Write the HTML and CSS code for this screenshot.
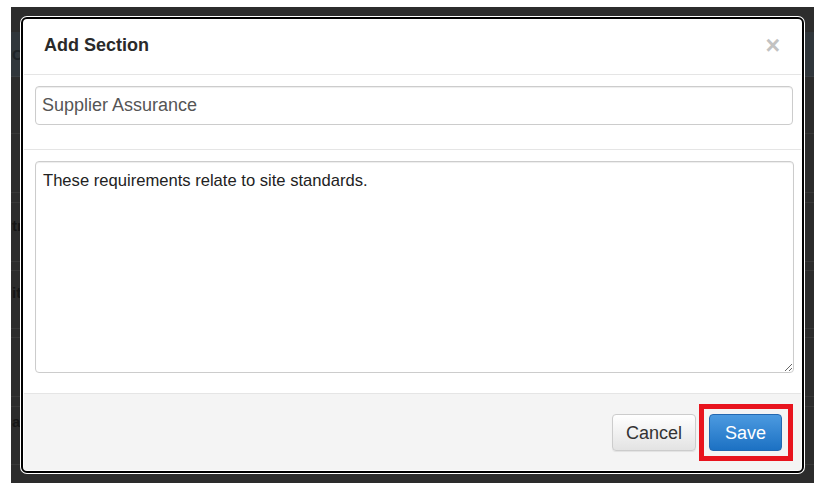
FILE: index.html
```html
<!DOCTYPE html>
<html lang="en">
<head>
<meta charset="utf-8">
<title>Add Section</title>
<link rel="stylesheet" href="styles.css">
</head>
<body>
<div class="backdrop">
  <div class="bg-row r-top"></div>
  <div class="bg-row r-band"><span class="bg-text">Co</span></div>
  <div class="bg-row r57"></div>
  <div class="bg-row r59"></div>
  <div class="bg-row r10"></div>
  <div class="bg-row r59"><span class="bg-text t-tr">tr</span></div>
  <div class="bg-row r9"></div>
  <div class="bg-row r58"><span class="bg-text t-ite">ite</span></div>
  <div class="bg-row r9"></div>
  <div class="bg-row r59"></div>
  <div class="bg-row r10"></div>
  <div class="bg-row r58"><span class="bg-text t-a">a</span></div>

  <div class="modal">
    <div class="modal-header">
      <h4 class="modal-title">Add Section</h4>
      <span class="close">×</span>
    </div>
    <div class="modal-section sec-input">
      <input class="field" type="text" value="Supplier Assurance">
    </div>
    <div class="modal-section sec-text">
      <textarea class="area">These requirements relate to site standards.</textarea>
    </div>
    <div class="modal-footer">
      <button class="btn btn-default">Cancel</button>
      <span class="highlight"><button class="btn btn-primary">Save</button></span>
    </div>
  </div>
</div>
</body>
</html>
```

FILE: styles.css
```css
html, body {
  margin: 0;
  padding: 0;
  background: #ffffff;
  font-family: "Liberation Sans", Arial, sans-serif;
}

.backdrop {
  position: relative;
  margin: 7px 0 0 11px;
  width: 803px;
  height: 476px;
  background: #2c2c2c;
  overflow: hidden;
}

.bg-row {
  box-sizing: border-box;
  border-bottom: 1px solid #383838;
  font-size: 15px;
  font-weight: bold;
  color: #151515;
  white-space: nowrap;
}
.r-top { height: 25px; border-bottom: none; background: #2d2d2d; }
.r-band { height: 45px; background: #30363b; border-bottom: 1px solid #3a3f43; padding-top: 14px; color: #1d2226; }
.r57 { height: 57px; }
.r59 { height: 59px; }
.r58 { height: 58px; }
.r10 { height: 10px; }
.r9 { height: 9px; }

.bg-text { display: inline-block; margin-left: 1px; }
.t-tr { padding-top: 14px; }
.t-ite { padding-top: 13px; }
.t-a { padding-top: 6px; }

.modal {
  position: absolute;
  left: 10px;
  top: 10px;
  box-sizing: border-box;
  width: 783px;
  height: 456px;
  border: 2px solid #000;
  padding: 1px;
  border-radius: 6px;
  background: #fff;
  box-shadow: 0 0 0 1px #fff;
  display: flex;
  flex-direction: column;
  overflow: hidden;
}

.modal-header {
  display: flex;
  align-items: center;
  justify-content: space-between;
  padding: 13px 21px 17px 20px;
  border-bottom: 1px solid #e5e5e5;
  height: 24px;
}
.modal-title {
  margin: 0;
  font-size: 18px;
  line-height: 24px;
  font-weight: bold;
  color: #2a2a2a;
}
.close {
  font-size: 25px;
  font-weight: bold;
  line-height: 24px;
  color: #c2c2c2;
}

.modal-section {
  padding: 11px 8px 0 11px;
  border-bottom: 1px solid #e5e5e5;
}
.sec-input { padding-bottom: 24px; }
.sec-text { padding-bottom: 20px; padding-right: 7px; }

.field {
  display: block;
  box-sizing: border-box;
  width: 100%;
  height: 39px;
  margin: 0;
  padding: 0 6px;
  border: 1px solid #cccccc;
  border-radius: 4px;
  box-shadow: inset 0 1px 1px rgba(0,0,0,0.075);
  font-family: "Liberation Sans", Arial, sans-serif;
  font-size: 18px;
  color: #555;
  background: #fff;
  outline: none;
}

.area {
  display: block;
  box-sizing: border-box;
  width: 100%;
  height: 212px;
  margin: 0;
  padding: 8px 7px;
  border: 1px solid #cccccc;
  border-radius: 4px;
  box-shadow: inset 0 1px 1px rgba(0,0,0,0.075);
  font-family: "Liberation Sans", Arial, sans-serif;
  font-size: 16.6px;
  line-height: 22px;
  color: #222;
  background: #fff;
  outline: none;
}

.modal-footer {
  flex: 1;
  display: flex;
  align-items: flex-start;
  justify-content: flex-end;
  gap: 3px;
  padding: 10px 8px 0 0;
  background: #f4f4f4;
}
.modal-footer > .btn-default { margin-top: 10px; }

.highlight {
  display: inline-block;
  border: 5px solid #e8141e;
  padding: 5px 6px 5px 5px;
  line-height: 0;
}

.btn {
  box-sizing: border-box;
  height: 37px;
  margin: 0;
  border-radius: 4px;
  font-family: "Liberation Sans", Arial, sans-serif;
  font-size: 18px;
  line-height: 1;
  cursor: pointer;
}
.btn-default {
  padding: 0 13px;
  color: #333;
  border: 1px solid #cccccc;
  background: linear-gradient(#ffffff, #e3e3e3);
  box-shadow: inset 0 1px 0 rgba(255,255,255,0.15), 0 1px 1px rgba(0,0,0,0.075);
}
.btn-primary {
  padding: 0 15px;
  color: #fff;
  border: 1px solid #2468b0;
  background: linear-gradient(#4c9ae0, #1c71c3);
}
```
